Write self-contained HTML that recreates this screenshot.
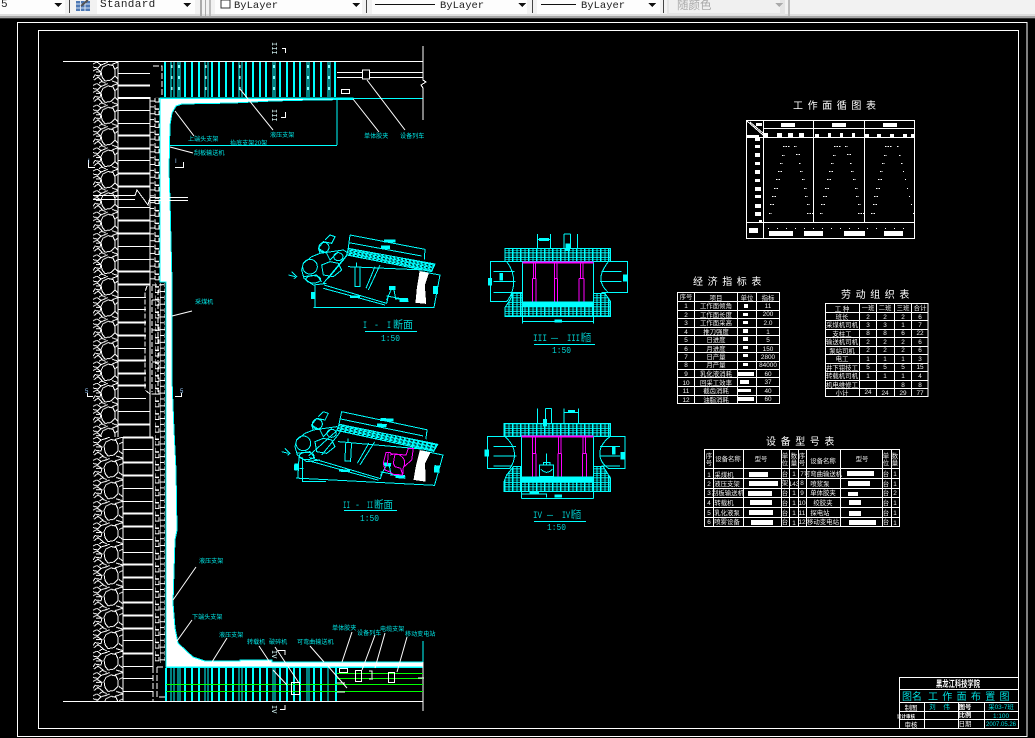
<!DOCTYPE html>
<html><head><meta charset="utf-8"><title>工作面布置图</title>
<style>
html,body{margin:0;padding:0;background:#000;width:1035px;height:738px;overflow:hidden}
svg{display:block;position:absolute;left:0;top:0}
text{font-family:"Liberation Sans","Noto Sans CJK SC",sans-serif}
.l text{font-size:6.1px;fill:#00e8e8}
.t text{font-size:6.4px;fill:#eee;text-anchor:middle}
.h{font-size:10px;fill:#fff;letter-spacing:4.6px}
.m{font-family:"Liberation Mono","Noto Sans CJK SC",monospace!important;font-size:10.5px;fill:#00d4d4}
.n{font-family:"Liberation Mono",monospace!important;font-size:9px;fill:#00d4d4}
.tb{font-family:"Liberation Mono","Liberation Serif",serif!important;font-size:11px;fill:#222}
.z *{vector-effect:non-scaling-stroke}
</style></head><body>
<svg width="1035" height="738" viewBox="0 0 1035 738" shape-rendering="crispEdges">
<defs>
<pattern id="r" patternUnits="userSpaceOnUse" x="93" y="62" width="25" height="21.4">
<g fill="none" stroke="#fff" stroke-width="1"><polygon points="15,2.500 20,3.500 22,8 22,14 18,18 12,19 9,15 8,9 10,5"/>
<path d="M0 2L4 0L8 3L5 6L0 5M0 9L4 7L8 10L7 14L2 13L0 16M1 18L5 15L9 19L6 21.4M8 3L12 1.5L15 0M19 2.5L25 0M22 7L25 5M22 14L25 17M19 19L25 21M8 19L13 21.4M8 10H3"/></g></pattern>
<pattern id="r2" patternUnits="userSpaceOnUse" x="93" y="437" width="30" height="21.4">
<g fill="none" stroke="#fff" stroke-width="1"><polygon points="18,2.500 23,3.500 25,8 25,14 21,18 15,19 12,15 11,9 13,5"/>
<path d="M0 2L4 0L8 3L5 6L0 5M0 9L4 7L9 10L8 14L2 13L0 16M1 18L5 15L10 19L6 21.4M8 3L13 1.5L17 0M22 2.5L30 0M26 7L30 5M26 14L30 17M23 19L30 21M9 19L14 21.4M9 10H3"/></g></pattern>
<pattern id="s" patternUnits="userSpaceOnUse" x="150" y="60" width="10" height="12.7">
<path d="M0 0V12.7M5 0V4M5 7V11M0 3H5M0 9H4M5 4H9V0M5 11H9" fill="none" stroke="#fff"/></pattern>
<pattern id="bk" patternUnits="userSpaceOnUse" x="675" y="85" width="24" height="13.5">
<rect width="24" height="13.5" fill="#0ff"/><rect x="2" y="2" width="8" height="3.5" fill="#000"/><rect x="13" y="2" width="8" height="3.5" fill="#000"/><rect x="2" y="8" width="8" height="3.5" fill="#000"/><rect x="13" y="8" width="8" height="3.5" fill="#000"/></pattern>
<pattern id="hat" patternUnits="userSpaceOnUse" width="12" height="9" patternTransform="rotate(12)">
<rect width="12" height="9" fill="#0ff"/><rect x="1" y="1" width="7" height="3" fill="#000"/><rect x="5" y="6" width="5" height="2" fill="#000"/></pattern>
<g id="rk" fill="none" stroke="#0ff" class="z">
<path d="M25 165L45 170M35 155L50 170L42 176M150 45L165 50L155 70L130 65L115 85L120 100L95 110L70 130L65 150L72 175L100 195L140 190M120 100L155 95L190 90L205 100M135 60L150 45M115 85L140 100L150 120L175 95M70 170L110 165L125 185M125 135L150 125L175 130L185 150L160 170L130 165ZM145 175L190 120L205 100"/>
<ellipse cx="90" cy="140" rx="22" ry="22"/><ellipse cx="100" cy="178" rx="22" ry="11"/><ellipse cx="132" cy="82" rx="15" ry="15"/><ellipse cx="175" cy="110" rx="14" ry="12"/>
</g>
<g id="mn" fill="none" stroke="#0ff" class="z">
<path d="M210 45L435 88L433 118M207 68L425 108M210 45L204 90M132 195L320 250L325 228M130 205L315 255M100 262H462L480 165L425 155M105 195V262M95 225H105M205 100L130 190M204 140L432 150M225 142V200H240V142M230 128V142M300 135L265 210M285 140L258 205M335 205L320 240M340 200L348 240M348 235L385 245M320 228L385 240"/>
<path d="M313 60H345V66H313ZM305 78H328V85H305ZM212 228H238V233H212ZM460 200H472V220H460ZM95 218H103V236H95ZM328 200H345V208H328ZM360 236H382V244H360Z" fill="#0ff"/>
<polygon points="205,85 465,132 455,155 200,105" fill="url(#hat)"/>
<polygon points="420,155 445,160 433,195 437,250 408,247 412,205" fill="#fff" stroke="#fff"/>
</g>
</defs>

<!-- toolbar -->
<g id="toolbar">
<rect width="1035" height="15" fill="#f2f2f2"/><rect y="14" width="1035" height="2" fill="#dedede"/><rect y="16" width="1035" height="2" fill="#a6a6a6"/><rect y="18" width="1035" height="1" fill="#333"/>
<rect x="0" y="0" width="65" height="14" fill="#fdfdfd"/><rect x="97" y="0" width="98" height="14" fill="#fdfdfd"/><rect x="215" y="0" width="147" height="14" fill="#fdfdfd"/><rect x="372" y="0" width="155" height="14" fill="#fdfdfd"/><rect x="537" y="0" width="123" height="14" fill="#fdfdfd"/>
<rect x="667" y="0" width="118" height="15" fill="#e4e4e4"/><rect x="669" y="0" width="111" height="13" fill="#f0f0f0"/><rect x="788" y="0" width="2" height="16" fill="#bbb"/>
<rect x="69" y="0" width="1" height="13" fill="#444"/><rect x="200" y="0" width="2" height="16" fill="#aaa"/><rect x="205" y="0" width="1" height="16" fill="#aaa"/><rect x="209" y="0" width="2" height="16" fill="#bbb"/><rect x="366" y="0" width="1" height="13" fill="#444"/><rect x="532" y="0" width="1" height="13" fill="#444"/><rect x="663" y="0" width="1" height="13" fill="#444"/>
<text x="1" y="7" class="tb">5</text>
<text x="100" y="7" class="tb" letter-spacing=".35">Standard</text>
<rect x="221" y="0" width="9" height="8" fill="#fff" stroke="#333"/>
<text x="234" y="8" class="tb" style="font-size:10.5px">ByLayer</text>
<rect x="375" y="4" width="60" height="1" fill="#111"/><text x="440" y="8" class="tb" style="font-size:10.5px">ByLayer</text>
<rect x="541" y="4" width="35" height="1" fill="#111"/><text x="581" y="8" class="tb" style="font-size:10.5px">ByLayer</text>
<text x="677" y="9" style="font-size:11.5px;fill:#a9a9a9">随颜色</text>
<g fill="#111"><path d="M54 3h8l-4 4zM183 3h8l-4 4zM352 3h8l-4 4zM518 3h8l-4 4zM648 3h8l-4 4z"/></g><path d="M775 3h8l-4 4z" fill="#aaa"/>
<rect x="76" y="1" width="14" height="10" fill="#4d78b4"/><path d="M76 4H90M76 8H90M80.500 1V11M85 1V11" stroke="#d5e2f2"/><path d="M81 6L88 0" stroke="#555" stroke-width="2"/>
</g>

<!-- frames -->
<g fill="none" stroke="#fff"><rect x="17.500" y="22.500" width="1009.500" height="714"/><rect x="38.500" y="30.500" width="980" height="698"/></g>

<!-- plan -->
<g id="plan">
<rect x="93" y="62" width="25" height="375" fill="url(#r)"/>
<rect x="93" y="437" width="30" height="264" fill="url(#r2)"/>
<rect x="150" y="97" width="10" height="186" fill="url(#s)"/><rect x="155" y="283" width="10" height="380" fill="url(#s)"/>
<path d="M118 62V437M123 437V701M150 97V437M153 437V667" stroke="#fff" fill="none"/>
<path d="M118 85.500H150M118 98H150M118 135.500H150M118 148.500H150M118 173.500H150M118 186.500H150M118 220.500H150M118 233.500H150M118 271.500H150M118 284.500H150M118 322.500H146M118 335.500H146M118 360.500H146M118 373.500H146M118 385.500H146M118 424.500H150M123 437.500H153M123 462.500H153M123 475.500H153M123 513.500H153M123 526.500H153M123 564.500H153M123 577.500H153M123 602.500H153M123 615.500H153M123 628.500H153M123 653.500H153" stroke="#fff" stroke-width="2"/>
<path d="M118 73.500H150M118 110.500H150M118 123.500H150M118 160.500H150M118 207.500H150M118 246.500H150M118 259.500H150M118 297.500H146M118 309.500H146M118 348.500H146M118 398.500H146M118 411.500H150M123 449.500H153M123 488.500H153M123 501.500H153M123 539.500H153M123 552.500H153M123 589.500H153M123 640.500H153M123 666.500H153M123 678.500H153M123 691.500H153" stroke="#fff"/>
<path d="M147 286L145 292V390L150 394H160M152 286V392M158 290V392M152 300H160M152 330H160M152 362H160M152 285H162" stroke="#fff" stroke-dasharray="5 2" fill="none"/>
<path d="M157 667H165M157 667V697H165M153 667V701M153 66H162V97" stroke="#fff" stroke-dasharray="6 2" fill="none"/>
<!-- coal face band -->
<path d="M160 98H353V99.500L313 100L273 101L233 103L182 104L176 106L172 113L170 125L169 170L170 200L172 282L172 380L174 430L176 470L177 530L175 540L173 603L175 628L178 643L193 657L205 661L240 661V660H272V662H423V667H166V282H160Z" fill="#fff" stroke="#0ff"/>
<path d="M160 98.500H423M166 667.500H423" stroke="#0ff" fill="none"/>
<path d="M337 100V145M170 145.500H337M423 641V662" stroke="#0ff" fill="none"/>
<!-- top supports -->
<path d="M165 62V97M185 62V97M192 62V97M199 62V97M212 62V97M219 62V97M226 62V97M233 62V97M246 62V97M253 62V97M260 62V97M266 62V97M280 62V97M287 62V97M294 62V97M300 62V97M314 62V97M321 62V97M335 62V97" stroke="#0ff" stroke-width="2" fill="none"/>
<path d="M171 62V97M174 62V97M178 62V97M180 62V97M205 62V97M208 62V97M239 62V97M242 62V97M273 62V97M275 62V97M307 62V97M309 62V97M328 62V97M330 62V97" stroke="#0ff" fill="none"/>
<path d="M172 65V95M179 65V95M206 65V95M240 65V95M274 65V95M308 65V95M329 65V95" stroke="#fff" stroke-dasharray="3 8" fill="none"/>
<!-- bottom supports -->
<path d="M166 668V701M185 668V701M192 668V701M199 668V701M212 668V701M219 668V701M226 668V701M233 668V701M246 668V701M253 668V701M260 668V701M267 668V701M280 668V701M287 668V701M294 668V701M300 668V701M314 668V701M321 668V701M336 668V701" stroke="#0ff" stroke-width="2" fill="none"/>
<path d="M171 668V701M174 668V701M178 668V701M180 668V701M205 668V701M208 668V701M239 668V701M242 668V701M273 668V701M275 668V701M307 668V701M309 668V701M328 668V701" stroke="#0ff" fill="none"/>
<!-- horizontals -->
<path d="M63 61.500H423M63 701.500H423M337 72.500H423M337 77.500H423M423 46V80L426 82L421 85L423 88V120M423 662V711" stroke="#fff" fill="none"/>
<path d="M93 195.500H135L137 190L148 205L150 197.500H188M93 199.500H135M150 200.500H188" stroke="#fff" fill="none"/>
<rect x="362.500" y="70" width="7" height="9" fill="#000" stroke="#fff"/><rect x="341.500" y="89.500" width="8" height="4" fill="#000" stroke="#fff"/>
<path d="M337 673.500H423M337 678.500H423M166 684.500H423M166 691.500H423" stroke="#0f0" fill="none"/>
<path d="M175 111L194 136M240 89L273 130M353 99L379 132M367 80L405 130M170 147L193 153M196 567L173 600M192 620L177 641M227 638L212 662M259 646L269 661M275 647L299 683M310 646L324 662M352 632L342 662M375 635L362 670M385 633L375 668M407 637L397 672M327 665L347 688M273 670L287 685M172 316L192 311" stroke="#fff" fill="none" shape-rendering="auto"/>
<g fill="none" stroke="#fff"><rect x="339.500" y="668.500" width="8" height="4"/><rect x="355.500" y="670.500" width="6" height="11"/><rect x="388.500" y="672.500" width="6" height="10"/><rect x="291.500" y="682.500" width="8" height="12"/>
<path d="M369 671H372V678M369 679H373M337 683H345M337 692H345M418 678H424"/>
<path d="M282 48.500H285.500V53M281 117.500H285.500V112M175 167.500H183.500V162M88.500 160V167.500H95M87.500 393V396.500H93M181.500 393V396.500H175M278 650.500H285V655M285 705V709.500H280"/></g>
<g><text transform="translate(272 42) rotate(90)" style="font-family:'Liberation Mono';font-size:7px;fill:#dff">III</text><text transform="translate(272 109) rotate(90)" style="font-family:'Liberation Mono';font-size:7px;fill:#dff">III</text><text transform="translate(272 650) rotate(90)" style="font-family:'Liberation Mono';font-size:7px;fill:#dff">IV</text><text transform="translate(272 705) rotate(90)" style="font-family:'Liberation Mono';font-size:7px;fill:#dff">IV</text>
<text x="175" y="163" style="font-size:6px;fill:#9cf">I</text><text x="88" y="163" style="font-size:6px;fill:#9cf">I</text><text x="85" y="393" style="font-size:6px;fill:#9cf">5</text><text x="180" y="393" style="font-size:6px;fill:#9cf">5</text></g>
<g class="l">
<text x="188" y="141">上端头支架</text><text x="270" y="137">液压支架</text><text x="230" y="145">抬底支架20架</text><text x="364" y="138">单体胶夹</text><text x="400" y="138">设备列车</text><text x="194" y="155">刮板输送机</text>
<text x="195" y="304">采煤机</text>
<text x="199" y="563">液压支架</text><text x="192" y="619">下端头支架</text><text x="219" y="637">液压支架</text><text x="247" y="644">转载机</text><text x="269" y="644">破碎机</text><text x="297" y="644">可弯曲输送机</text><text x="332" y="630">单体胶夹</text><text x="357" y="635">设备列车</text><text x="380" y="631">电缆支架</text><text x="405" y="636">移动变电站</text>
</g>
</g>

<!-- sections -->
<g transform="translate(280 220) scale(.33333)">
<use href="#rk"/><use href="#mn"/>
<use href="#rk" transform="translate(-20 530)"/>
<use href="#mn" transform="translate(185 575) rotate(3) scale(1.15 .95) translate(-210 -45)"/>
<g class="z" fill="none">
<path d="M68 712V785H138M58 745H70" stroke="#0ff"/>
<path d="M310 730L318 698H330L335 702L378 705L385 685H400L395 720L370 742L368 765L340 763L328 755L315 750ZM325 700L322 735M345 702L340 730L345 740L362 745L368 765M330 705C360 695 380 715 372 740" stroke="#f0f"/>
<!-- III -->
<rect x="675" y="85" width="317" height="40" fill="url(#bk)" stroke="#0ff"/>
<path d="M675 290V262L690 240L698 218H727V258H940V220H975L992 245V290Z" fill="url(#bk)" stroke="#0ff"/>
<rect x="727" y="245" width="213" height="13" fill="#0ff"/>
<path d="M632 125H680C708 160 708 210 680 245H632ZM640 155H703M640 185H707M640 217H703M727 125V310M940 125V310M727 305H940M1043 125H985C955 165 955 190 985 218H1043ZM965 155H1025M960 185H1025M965 217H1025M772 42V85M812 42V85M852 42V85M872 42V85M892 42V85M772 58H812M852 42H872" stroke="#0ff"/>
<path d="M625 175H635V195H625ZM1030 165H1040V183H1030ZM660 160H668V180H660ZM825 300H845V306H825ZM778 55H806V62H778ZM858 72H868V92H858Z" fill="#0ff" stroke="#0ff"/>
<path d="M727 127H940" stroke="#f0f" stroke-width="2"/>
<path d="M760 128V175M766 128V175M757 175V245M768 175V245M757 175H768M823 128V175M831 128V175M823 175V245M833 175V245M823 175H833M901 128V175M909 128V175M897 175V245M912 175V245M897 175H912" stroke="#f0f"/>
<!-- IV -->
<rect x="672" y="610" width="320" height="40" fill="url(#bk)" stroke="#0ff"/>
<path d="M672 815V785L680 765L700 740H725V785H940V740H970L992 775V815Z" fill="url(#bk)" stroke="#0ff"/>
<rect x="725" y="770" width="215" height="14" fill="#0ff"/>
<path d="M622 650H675C710 680 710 715 690 745H622ZM640 680H708M640 708H710M640 738H695M725 650V835M940 650V835M725 835H940M725 822H800V832M1035 650H990C950 680 950 720 985 745H1035ZM960 680H1020M958 708H1020M965 738H1020M772 565V610M797 565V610M815 565V610M852 565V610M895 565V610M797 565H815M852 577H895" stroke="#0ff"/>
<path d="M615 690H625V708H615ZM1023 697H1033V717H1023ZM997 682H1005V702H997ZM825 825H845V831H825ZM750 816H775V821H750ZM790 598H800V618H790ZM865 572H883V577H865Z" fill="#0ff" stroke="#0ff"/>
<path d="M725 650H940" stroke="#f0f" stroke-width="2"/>
<path d="M758 651V700M766 651V700M757 700V770M768 700V770M757 700H768M835 651V700M843 651V700M834 700V770M845 700V770M834 700H845M909 651V700M917 651V700M907 700V770M920 700V770M907 700H920" stroke="#f0f"/>
<path d="M778 735H820V770H778ZM800 700V735M783 748C795 760 805 760 817 748M790 728H810V735H790Z" stroke="#0ff"/>
</g></g>
<g>
<text x="363" y="328" class="m" textLength="4" lengthAdjust="spacingAndGlyphs">I</text><text x="374" y="328" class="m" textLength="5" lengthAdjust="spacingAndGlyphs">-</text><text x="387" y="328" class="m" textLength="4" lengthAdjust="spacingAndGlyphs">I</text><text x="393" y="328" class="m" textLength="20" lengthAdjust="spacingAndGlyphs">断面</text><rect x="365" y="331" width="52" height="1" fill="#0ff"/><text x="381" y="341" class="n" textLength="19" lengthAdjust="spacingAndGlyphs">1:50</text>
<text x="533" y="341" class="m" textLength="14" lengthAdjust="spacingAndGlyphs">III</text><text x="551" y="341" class="m" textLength="7" lengthAdjust="spacingAndGlyphs">—</text><text x="567" y="341" class="m" textLength="13" lengthAdjust="spacingAndGlyphs">III</text><text x="581" y="341" class="m" textLength="10" lengthAdjust="spacingAndGlyphs">断面</text><rect x="534" y="344" width="61" height="1" fill="#0ff"/><text x="552" y="353" class="n" textLength="19" lengthAdjust="spacingAndGlyphs">1:50</text>
<text x="343" y="508" class="m" textLength="7" lengthAdjust="spacingAndGlyphs">II</text><text x="355" y="508" class="m" textLength="5" lengthAdjust="spacingAndGlyphs">-</text><text x="367" y="508" class="m" textLength="6" lengthAdjust="spacingAndGlyphs">II</text><text x="374" y="508" class="m" textLength="19" lengthAdjust="spacingAndGlyphs">断面</text><rect x="344" y="510" width="53" height="1" fill="#0ff"/><text x="360" y="521" class="n" textLength="19" lengthAdjust="spacingAndGlyphs">1:50</text>
<text x="533" y="518" class="m" textLength="9" lengthAdjust="spacingAndGlyphs">IV</text><text x="547" y="518" class="m" textLength="6" lengthAdjust="spacingAndGlyphs">—</text><text x="562" y="518" class="m" textLength="8" lengthAdjust="spacingAndGlyphs">IV</text><text x="571" y="518" class="m" textLength="10" lengthAdjust="spacingAndGlyphs">断面</text><rect x="534" y="521" width="52" height="1" fill="#0ff"/><text x="547" y="530" class="n" textLength="19" lengthAdjust="spacingAndGlyphs">1:50</text>
</g>

<!-- table: 工作面循图表 -->
<text x="793" y="109" class="h">工作面循图表</text>
<g fill="none" stroke="#fff"><rect x="746.500" y="120.500" width="168" height="118"/><path d="M763.500 120V238M813.500 120V222M864.500 120V222M763 128.500H915M747 137.500H915M747 222.500H915M747 121L763 135M750 122L763 133"/></g>
<g fill="#fff"><rect x="781" y="123" width="14" height="4"/><rect x="832" y="123" width="14" height="4"/><rect x="883" y="123" width="14" height="4"/>
<rect x="756" y="123" width="6" height="3"/><rect x="747" y="135" width="12" height="3"/><rect x="764" y="133" width="4" height="4"/><rect x="777" y="133" width="5" height="4"/><rect x="788" y="133" width="5" height="4"/><rect x="799" y="133" width="5" height="4"/><rect x="815" y="134" width="4" height="4"/><rect x="828" y="133" width="3" height="5"/><rect x="840" y="133" width="3" height="5"/><rect x="852" y="133" width="3" height="5"/><rect x="865" y="134" width="4" height="4"/><rect x="877" y="134" width="4" height="4"/><rect x="890" y="134" width="4" height="4"/><rect x="903" y="134" width="4" height="4"/><rect x="911" y="134" width="4" height="4"/>
<rect x="755" y="137" width="5" height="4"/><rect x="755" y="145" width="5" height="3"/><rect x="755" y="153" width="5" height="4"/><rect x="755" y="162" width="5" height="3"/><rect x="755" y="170" width="5" height="4"/><rect x="755" y="179" width="5" height="3"/><rect x="755" y="187" width="6" height="4"/><rect x="755" y="195" width="6" height="3"/><rect x="755" y="204" width="6" height="4"/><rect x="755" y="212" width="6" height="4"/><rect x="759" y="220" width="3" height="3"/>
<rect x="749" y="228" width="9" height="5"/><rect x="769" y="231" width="24" height="5"/><rect x="804" y="231" width="19" height="5"/><rect x="844" y="231" width="21" height="5"/><rect x="884" y="231" width="19" height="5"/></g>
<g id="dots" fill="none" stroke="#fff" stroke-dasharray="1.500 1"><path d="M783 146.500H790M794 146.500H797M782 155.500H785M796 154.500H800M780 163.500H783M799 163.500H801M778 171.500H782M800 171.500H803M776 179.500H781M802 179.500H805M774 188.500H779M804 188.500H807M772 196.500H777M805 196.500H808M770 204.500H775M807 204.500H810M769 213.500H772M807 213.500H813"/></g>
<use href="#dots" x="51"/>
<g fill="none" stroke="#fff" stroke-dasharray="1.500 1"><path d="M885 146.500H892M897 146.500H899M884 155.500H887M899 155.500H901M882 163.500H885M901 163.500H903M880 171.500H883M903 171.500H904M878 179.500H882M905 179.500H906M876 188.500H880M907 188.500H908M874 196.500H878M909 196.500H910M873 204.500H877M911 204.500H912M871 213.500H875M913 213.500H914"/></g>
<path d="M768 228.500H912" stroke="#fff" stroke-dasharray="1 8"/>

<!-- 经济指标表 -->
<text x="693" y="285" class="h">经济指标表</text>
<g fill="none" stroke="#fff"><rect x="677.500" y="292.500" width="102" height="111"/><path d="M694.500 292V403M737.500 292V403M756.500 292V403M677 301.500H780M677 310.500H780M677 318.500H780M677 327.500H780M677 335.500H780M677 344.500H780M677 352.500H780M677 361.500H780M677 369.500H780M677 377.500H780M677 386.500H780M677 395.500H780"/></g>
<g fill="#fff"><rect x="744" y="304" width="4" height="4"/><rect x="743" y="313" width="5" height="3"/><rect x="743" y="321" width="5" height="3"/><rect x="743" y="329" width="5" height="4"/><rect x="743" y="337" width="5" height="4"/><rect x="743" y="346" width="5" height="3"/><rect x="743" y="354" width="5" height="3"/><rect x="743" y="363" width="5" height="3"/><rect x="738" y="372" width="16" height="4"/><rect x="740" y="380" width="9" height="4"/><rect x="738" y="389" width="13" height="3"/><rect x="738" y="397" width="16" height="4"/></g>
<g class="t">
<text x="686" y="299">序号</text><text x="716" y="300">项目</text><text x="747" y="300">单位</text><text x="768" y="300">指标</text>
<text x="686" y="308">1</text><text x="716" y="308">工作面倾角</text><text x="768" y="308">11</text>
<text x="686" y="317">2</text><text x="716" y="317">工作面长度</text><text x="768" y="316">200</text>
<text x="686" y="325">3</text><text x="716" y="325">工作面采高</text><text x="768" y="325">2.0</text>
<text x="686" y="334">4</text><text x="716" y="334">推刀强度</text><text x="768" y="334">1</text>
<text x="686" y="342">5</text><text x="716" y="342">日进度</text><text x="768" y="342">5</text>
<text x="686" y="351">6</text><text x="716" y="351">月进度</text><text x="768" y="351">150</text>
<text x="686" y="359">7</text><text x="716" y="359">日产量</text><text x="768" y="359">2800</text>
<text x="686" y="367">8</text><text x="716" y="367">月产量</text><text x="768" y="367">84000</text>
<text x="686" y="376">9</text><text x="716" y="376">乳化液消耗</text><text x="768" y="376">60</text>
<text x="686" y="385">10</text><text x="716" y="385">回采工效率</text><text x="768" y="384">37</text>
<text x="686" y="393">11</text><text x="716" y="393">截齿消耗</text><text x="768" y="393">40</text>
<text x="686" y="402">12</text><text x="716" y="402">油脂消耗</text><text x="768" y="401">60</text>
</g>

<!-- 劳动组织表 -->
<text x="841" y="298" class="h">劳动组织表</text>
<g fill="none" stroke="#fff"><rect x="825.500" y="303.500" width="102.500" height="93"/><path d="M859.500 303V397M876.500 303V397M894.500 303V397M911.500 303V397M825 312.500H928M825 320.500H928M825 329.500H928M825 337.500H928M825 346.500H928M825 354.500H928M825 363.500H928M825 371.500H928M825 380.500H928M825 388.500H928"/></g>
<g class="t">
<text x="842" y="311">工 种</text><text x="868" y="310">一班</text><text x="885" y="310">二班</text><text x="903" y="310">三班</text><text x="920" y="310">合计</text>
<text x="842" y="319">班长</text><text x="868" y="319">2</text><text x="885" y="319">2</text><text x="903" y="319">2</text><text x="920" y="319">6</text>
<text x="842" y="327">采煤机司机</text><text x="868" y="327">3</text><text x="885" y="327">3</text><text x="903" y="327">1</text><text x="920" y="327">7</text>
<text x="842" y="336">支柱工</text><text x="868" y="335">8</text><text x="885" y="335">8</text><text x="903" y="335">6</text><text x="920" y="335">22</text>
<text x="842" y="344">输送机司机</text><text x="868" y="344">2</text><text x="885" y="344">2</text><text x="903" y="344">2</text><text x="920" y="344">6</text>
<text x="842" y="353">泵站司机</text><text x="868" y="352">2</text><text x="885" y="352">2</text><text x="903" y="352">2</text><text x="920" y="352">6</text>
<text x="842" y="361">电工</text><text x="868" y="361">1</text><text x="885" y="361">1</text><text x="903" y="361">1</text><text x="920" y="361">3</text>
<text x="842" y="370">井下钳技工</text><text x="868" y="369">5</text><text x="885" y="369">5</text><text x="903" y="369">5</text><text x="920" y="369">15</text>
<text x="842" y="378">转载机司机</text><text x="868" y="378">1</text><text x="885" y="378">1</text><text x="903" y="378">1</text><text x="920" y="378">4</text>
<text x="842" y="387">机电维修工</text><text x="903" y="387">8</text><text x="920" y="387">8</text>
<text x="842" y="395">小计</text><text x="868" y="394">24</text><text x="885" y="395">24</text><text x="903" y="395">29</text><text x="920" y="395">77</text>
</g>

<!-- 设备型号表 -->
<text x="766" y="445" class="h">设备型号表</text>
<g fill="none" stroke="#fff"><rect x="704.500" y="449.500" width="195" height="77"/><path d="M713.500 449V527M743.500 449V527M781.500 449V527M789.500 449V527M798.500 449V527M806.500 449V527M840.500 449V527M882.500 449V527M891.500 449V527M704 468.500H900M704 478.500H900M704 488.500H900M704 497.500H900M704 507.500H900M704 517.500H900"/></g>
<g fill="#fff"><rect x="749" y="472" width="19" height="5"/><rect x="749" y="481" width="29" height="5"/><rect x="748" y="491" width="24" height="5"/><rect x="750" y="500" width="22" height="5"/><rect x="749" y="510" width="24" height="5"/><rect x="751" y="520" width="22" height="5"/>
<rect x="847" y="471" width="27" height="5"/><rect x="848" y="481" width="22" height="5"/><rect x="848" y="492" width="10" height="4"/><rect x="849" y="500" width="12" height="5"/><rect x="849" y="511" width="12" height="5"/><rect x="849" y="520" width="27" height="5"/></g>
<g class="t">
<text x="709" y="458">序</text><text x="709" y="465">号</text><text x="728" y="461">设备名称</text><text x="761" y="461">型号</text><text x="785" y="458">单</text><text x="785" y="465">位</text><text x="794" y="458">数</text><text x="794" y="465">量</text><text x="802" y="458">序</text><text x="802" y="465">号</text><text x="823" y="463">设备名称</text><text x="862" y="461">型号</text><text x="886" y="458">单</text><text x="886" y="465">位</text><text x="895" y="458">数</text><text x="895" y="465">量</text>
<text x="709" y="477">1</text><text x="724" y="477">采煤机</text><text x="785" y="476">台</text><text x="794" y="476">1</text><text x="802" y="476">7</text><text x="823" y="476">可弯曲输送机</text><text x="886" y="476">台</text><text x="895" y="476">1</text>
<text x="709" y="486">2</text><text x="727" y="486">液压支架</text><text x="785" y="485">架</text><text x="794" y="486">143</text><text x="802" y="485">8</text><text x="820" y="486">喷浆泵</text><text x="886" y="486">台</text><text x="895" y="486">1</text>
<text x="709" y="495">3</text><text x="728" y="495">刮板输送机</text><text x="785" y="495">台</text><text x="794" y="495">1</text><text x="802" y="495">9</text><text x="823" y="495">单体胶夹</text><text x="886" y="495">台</text><text x="895" y="495">2</text>
<text x="709" y="505">4</text><text x="724" y="505">转载机</text><text x="785" y="505">台</text><text x="794" y="505">1</text><text x="802" y="505">10</text><text x="823" y="505">绞胶夹</text><text x="886" y="505">台</text><text x="895" y="505">1</text>
<text x="709" y="515">5</text><text x="727" y="515">乳化液泵</text><text x="785" y="515">台</text><text x="794" y="515">1</text><text x="802" y="515">11</text><text x="820" y="515">探电站</text><text x="886" y="515">台</text><text x="895" y="515">1</text>
<text x="709" y="524">6</text><text x="727" y="524">喷雾设备</text><text x="785" y="524">台</text><text x="794" y="525">1</text><text x="802" y="524">12</text><text x="823" y="524">移动变电站</text><text x="886" y="524">台</text><text x="895" y="525">1</text>
</g>

<!-- title block -->
<g fill="none" stroke="#fff"><rect x="899.500" y="677.500" width="119" height="51"/><path d="M899 689.500H1018M899 702.500H1018M899 711.500H1018M899 719.500H1018M924.500 702V728M958.500 702V728M984.500 702V728"/></g>
<text x="936" y="687" textLength="44" lengthAdjust="spacingAndGlyphs" style="font-size:9px;fill:#fff;font-weight:bold">黑龙江科技学院</text>
<text x="902" y="700" style="font-size:10px;fill:#0dd">图名</text>
<text x="928" y="700" style="font-size:10px;fill:#0dd;letter-spacing:4.3px">工作面布置图</text>
<g class="t"><text x="911" y="710" style="fill:#fff">制图</text><text x="906" y="718" style="fill:#fff;font-weight:bold;font-size:4.5px">设计审核</text><text x="911" y="727" style="fill:#fff">审核</text>
<text x="941" y="709" style="fill:#0dd;letter-spacing:3px">刘 伟</text>
<text x="965" y="709" style="fill:#fff;font-weight:bold">图号</text><text x="965" y="717" style="fill:#fff;font-weight:bold">比例</text><text x="965" y="726" style="fill:#fff">日期</text>
<text x="1001" y="709" style="fill:#0dd">采03-7班</text><text x="1001" y="718" style="fill:#0dd">1:100</text><text x="1001" y="726" style="fill:#0dd;font-size:6px">2007.05.26</text></g>
</svg>
</body></html>
